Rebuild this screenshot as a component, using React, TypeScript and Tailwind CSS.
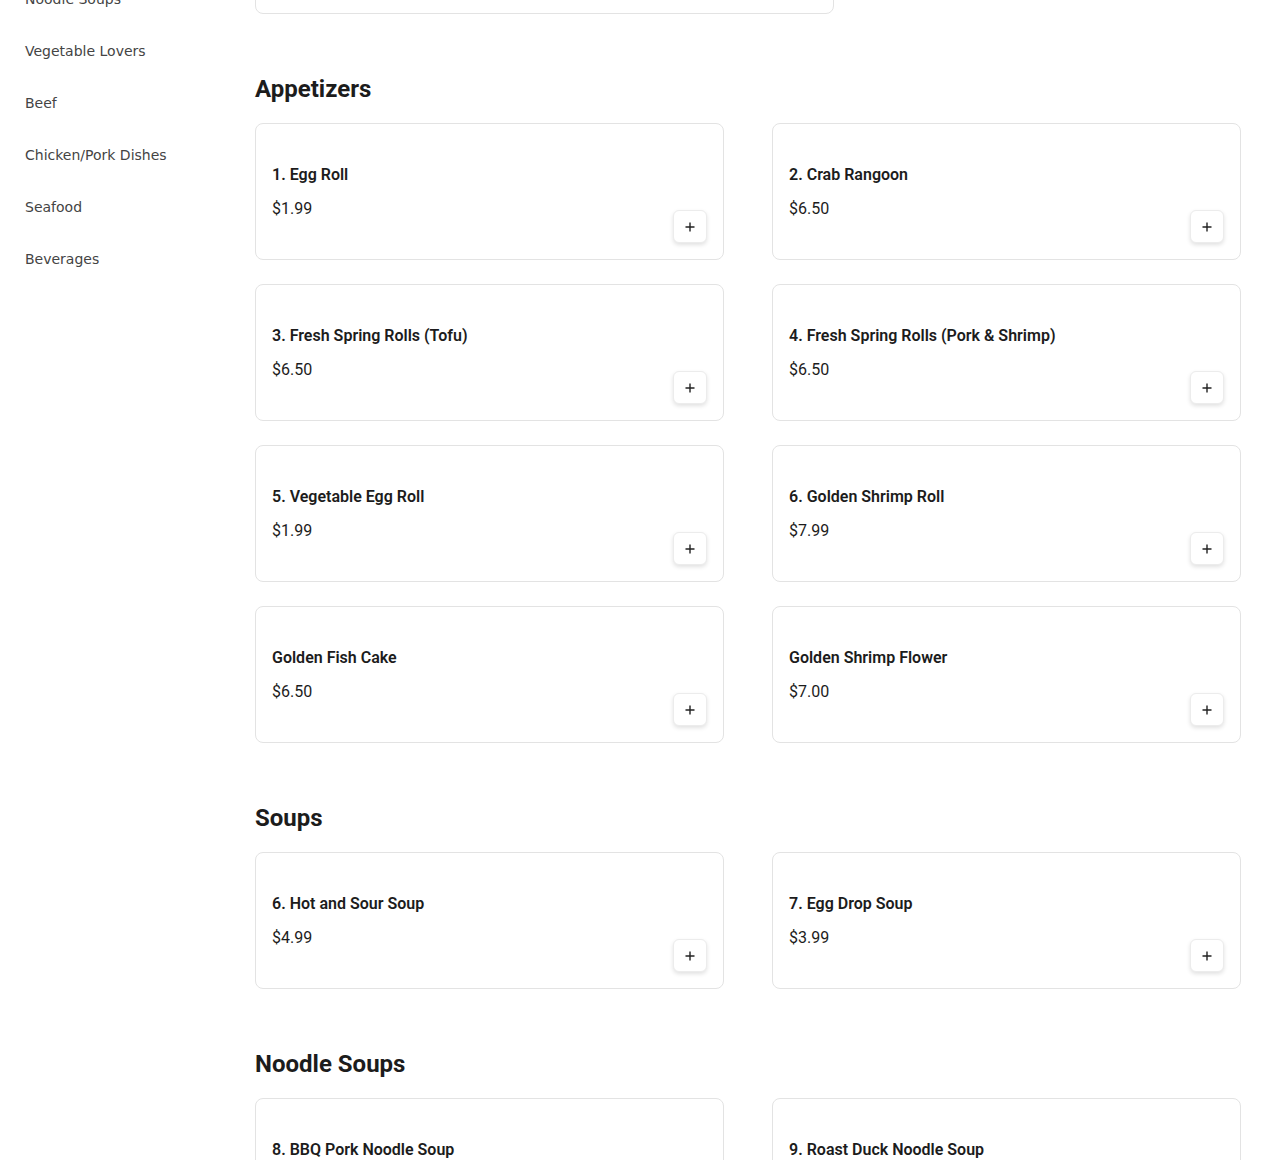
import React from "react";

const sections = [
  {
    title: "Appetizers",
    items: [
      ["1. Egg Roll", "$1.99"],
      ["2. Crab Rangoon", "$6.50"],
      ["3. Fresh Spring Rolls (Tofu)", "$6.50"],
      ["4. Fresh Spring Rolls (Pork & Shrimp)", "$6.50"],
      ["5. Vegetable Egg Roll", "$1.99"],
      ["6. Golden Shrimp Roll", "$7.99"],
      ["Golden Fish Cake", "$6.50"],
      ["Golden Shrimp Flower", "$7.00"],
    ],
  },
  {
    title: "Soups",
    items: [
      ["6. Hot and Sour Soup", "$4.99"],
      ["7. Egg Drop Soup", "$3.99"],
    ],
  },
  {
    title: "Noodle Soups",
    items: [
      ["8. BBQ Pork Noodle Soup", "$9.99"],
      ["9. Roast Duck Noodle Soup", "$10.99"],
    ],
  },
];

const nav = ["Noodle Soups", "Vegetable Lovers", "Beef", "Chicken/Pork Dishes", "Seafood", "Beverages"];

function Card({ name, price }: { name: string; price: string }) {
  return (
    <div className="flex h-[137px] items-center justify-between rounded-lg border border-[#e3e3e3] bg-white p-4">
      <div className="flex flex-col gap-[10px]">
        <div className="text-[16px] font-semibold leading-6 text-[#1c1c1c]">{name}</div>
        <div className="text-[16px] leading-6 text-[#1c1c1c]">{price}</div>
      </div>
      <button className="flex h-[33px] w-[34px] self-end items-center justify-center rounded-md border border-[#ececec] bg-white shadow-[0_2px_4px_rgba(0,0,0,0.12)]">
        <svg width="12" height="12" viewBox="0 0 12 12" fill="none" stroke="#222" strokeWidth="1.4">
          <path d="M6 1.5v9M1.5 6h9" />
        </svg>
      </button>
    </div>
  );
}

export default function App() {
  return (
    <div className="flex min-h-[1160px] overflow-hidden bg-white font-['Roboto',sans-serif]">
      <aside className="w-[255px] shrink-0 pl-[25px]">
        <nav className="mt-[-27px] flex flex-col font-['DejaVu_Sans',sans-serif] text-[14px] text-[#444]">
          {nav.map((n) => (
            <div key={n} className="py-4 leading-5">
              {n}
            </div>
          ))}
        </nav>
      </aside>
      <main className="w-[986px] shrink-0">
        <div className="mt-[-35px] h-[49px] w-[579px] rounded-lg border border-[#e3e3e3] bg-white" />
        {sections.map((s) => (
          <section key={s.title} className="mt-[59px]">
            <h2 className="mb-[18px] text-[24px] font-bold leading-8 text-[#1c1c1c]">{s.title}</h2>
            <div className="grid grid-cols-2 gap-x-12 gap-y-6">
              {s.items.map(([n, p]) => (
                <Card key={n} name={n} price={p} />
              ))}
            </div>
          </section>
        ))}
      </main>
    </div>
  );
}
